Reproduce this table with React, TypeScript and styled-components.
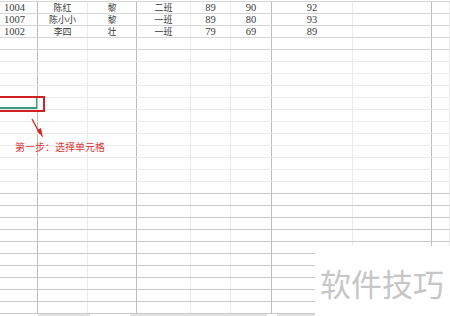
import styled, { createGlobalStyle } from 'styled-components'

const GlobalStyle = createGlobalStyle`
  html, body {
    margin: 0;
    padding: 0;
    background: #fff;
  }
`

// 列宽与竖线深浅
const COLS = [38, 50, 49, 54, 40, 41, 81, 79, 18]
const DARK_COLS = [0, 2, 5, 7]

const rows = [
  ['1004', '陈红', '黎', '二班', '89', '90', '92'],
  ['1007', '陈小小', '黎', '一班', '89', '80', '93'],
  ['1002', '李四', '壮', '一班', '79', '69', '89'],
]

const ROW_COUNT = 26
const SELECTED_ROW = 8

function bandColor(i: number) {
  if (i < 4) return '#d6d6d6'
  if (i < 15) return '#ececec'
  return '#c9c9c9'
}

export default function App() {
  return (
    <>
      <GlobalStyle />
      <Sheet>
        <Grid>
          {Array.from({ length: ROW_COUNT }).map((_, r) => (
            <Row key={r} $line={bandColor(r)}>
              {COLS.map((_, c) => {
                const value = rows[r]?.[c] ?? ''
                return (
                  <Cell
                    key={c}
                    $dark={DARK_COLS.includes(c)}
                    $left={c === 0}
                    $cjk={/[^\x00-\x7f]/.test(value)}
                    $selected={r === SELECTED_ROW && c === 0}
                  >
                    {value}
                  </Cell>
                )
              })}
            </Row>
          ))}
        </Grid>
        <Strip>
          <StripBar $w={38} />
          <StripBar $w={52} $on />
          <StripBar $w={40} />
          <StripBar $w={137} $on />
          <StripBar $w={10} />
          <StripBar $w={38} $on />
        </Strip>

        <RedBox />
        <Arrow viewBox="0 0 20 24" width="20" height="24">
          <line x1="3" y1="2" x2="11" y2="17" stroke="#d42424" strokeWidth="1.3" />
          <polygon points="8,13 12,11 14,21" fill="#d42424" />
        </Arrow>
        <StepLabel>第一步：选择单元格</StepLabel>

        <Watermark>软件技巧</Watermark>
      </Sheet>
    </>
  )
}

const Sheet = styled.div`
  position: relative;
  width: 450px;
  height: 316px;
  overflow: hidden;
  background: #fff;
  display: flex;
  flex-direction: column;
`

const Grid = styled.div`
  margin-top: 1px;
  border-top: 1px solid #d6d6d6;
  display: flex;
  flex-direction: column;
`

const Row = styled.div<{ $line: string }>`
  display: grid;
  grid-template-columns: ${COLS.map((w) => `${w}px`).join(' ')};
  height: 12px;
  box-sizing: border-box;
  border-bottom: 1px solid ${(p) => p.$line};
`

const Cell = styled.div<{ $dark: boolean; $left: boolean; $cjk: boolean; $selected: boolean }>`
  box-sizing: border-box;
  overflow: hidden;
  border-right: 1px solid ${(p) => (p.$dark ? '#bcbcbc' : '#ebebeb')};
  display: flex;
  align-items: center;
  justify-content: ${(p) => (p.$left ? 'flex-start' : 'center')};
  padding-left: ${(p) => (p.$left ? '4px' : '0')};
  font-family: ${(p) =>
    p.$cjk ? '"Noto Sans CJK SC", sans-serif' : '"Liberation Serif", serif'};
  font-size: ${(p) => (p.$cjk ? '9px' : '10.5px')};
  line-height: 11px;
  color: #3a3a3a;
  white-space: nowrap;
  box-shadow: ${(p) => (p.$selected ? 'inset -1px -2px 0 #3c9a80' : 'none')};
`

const Strip = styled.div`
  flex: 1;
  display: flex;
  align-items: flex-end;
`

const StripBar = styled.div<{ $w: number; $on?: boolean }>`
  width: ${(p) => p.$w}px;
  height: 2px;
  background: ${(p) => (p.$on ? '#e2e2e2' : 'transparent')};
`

const RedBox = styled.div`
  position: absolute;
  left: -3px;
  top: 96px;
  width: 44px;
  height: 12px;
  border: 2px solid #d02222;
`

const Arrow = styled.svg`
  position: absolute;
  left: 29px;
  top: 117px;
`

const StepLabel = styled.div`
  position: absolute;
  left: 15px;
  top: 141px;
  font-family: "Noto Sans CJK SC", sans-serif;
  font-size: 10px;
  line-height: 12px;
  color: #dc3a3a;
  white-space: nowrap;
`

const Watermark = styled.div`
  position: absolute;
  left: 315px;
  top: 246px;
  right: 0;
  bottom: 0;
  background: #fff;
  display: flex;
  align-items: center;
  padding-left: 5px;
  padding-top: 2px;
  font-family: "Noto Sans CJK SC", sans-serif;
  font-size: 31px;
  letter-spacing: 0;
  color: #c6c6c6;
  white-space: nowrap;
`
